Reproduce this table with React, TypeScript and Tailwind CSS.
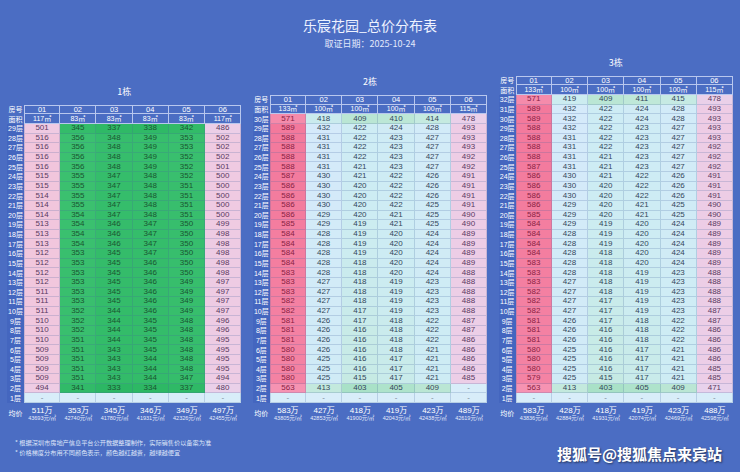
import React from 'react';

type Building = {
  name: string;
  areas: string[];
  top: number;
  rows: string[];
  avg: [string, string][];
};

const B1: Building = {
  name: '1栋',
  areas: ['117㎡', '83㎡', '83㎡', '83㎡', '83㎡', '117㎡'],
  top: 29,
  rows: [
    '501 345 337 338 342 486',
    '516 356 348 349 353 502',
    '516 356 348 349 353 502',
    '516 356 348 349 352 502',
    '516 356 348 349 352 501',
    '515 355 347 348 352 500',
    '515 355 347 348 351 500',
    '514 355 347 348 351 500',
    '514 355 347 348 351 500',
    '514 354 347 348 351 500',
    '513 354 346 347 350 499',
    '513 354 346 347 350 498',
    '513 354 346 347 350 498',
    '512 353 345 347 350 498',
    '512 353 345 346 350 498',
    '512 353 345 346 350 498',
    '512 353 345 346 349 497',
    '511 353 345 346 349 497',
    '511 353 345 346 349 497',
    '511 352 344 346 349 497',
    '510 352 344 345 348 496',
    '510 352 344 345 348 496',
    '510 351 344 345 348 495',
    '509 351 343 345 348 495',
    '509 351 343 344 348 495',
    '509 351 343 344 348 495',
    '509 351 343 344 347 494',
    '494 341 333 334 337 480',
    '- - - - - -',
  ],
  avg: [
    ['511万', '43693元/㎡'],
    ['353万', '42740元/㎡'],
    ['345万', '41780元/㎡'],
    ['346万', '41931元/㎡'],
    ['349万', '42326元/㎡'],
    ['497万', '42455元/㎡'],
  ],
};

const B2: Building = {
  name: '2栋',
  areas: ['133㎡', '100㎡', '100㎡', '100㎡', '100㎡', '115㎡'],
  top: 30,
  rows: [
    '571 418 409 410 414 478',
    '589 432 422 424 428 493',
    '588 431 422 423 427 493',
    '588 431 422 423 427 493',
    '588 431 422 423 427 492',
    '588 431 421 423 427 492',
    '587 430 421 422 426 491',
    '586 430 420 422 426 491',
    '586 430 420 422 426 491',
    '586 430 420 422 425 491',
    '586 429 420 421 425 490',
    '585 429 419 421 425 490',
    '584 428 419 420 424 489',
    '584 428 419 420 424 489',
    '584 428 419 420 424 489',
    '584 428 418 420 424 489',
    '583 428 418 420 424 488',
    '583 427 418 419 423 488',
    '583 427 418 419 423 488',
    '582 427 418 419 423 488',
    '582 427 417 419 423 488',
    '581 426 417 418 422 487',
    '581 426 416 418 422 487',
    '581 426 416 418 422 486',
    '580 426 416 418 421 486',
    '580 425 416 417 421 486',
    '580 425 416 417 421 486',
    '580 425 415 417 421 485',
    '563 413 403 405 409 -',
    '- - - - - -',
  ],
  avg: [
    ['583万', '43805元/㎡'],
    ['427万', '42853元/㎡'],
    ['418万', '41900元/㎡'],
    ['419万', '42043元/㎡'],
    ['423万', '42438元/㎡'],
    ['489万', '42619元/㎡'],
  ],
};

const B3: Building = {
  name: '3栋',
  areas: ['133㎡', '100㎡', '100㎡', '100㎡', '100㎡', '115㎡'],
  top: 32,
  rows: [
    '571 419 409 411 415 478',
    '589 432 422 424 428 493',
    '589 432 422 424 428 493',
    '588 432 422 423 427 493',
    '588 431 422 423 427 493',
    '588 431 422 423 427 492',
    '588 431 421 423 427 492',
    '587 431 421 423 427 492',
    '586 430 421 422 426 491',
    '586 430 420 422 426 491',
    '586 430 420 422 426 491',
    '586 429 420 421 425 490',
    '585 429 420 421 425 490',
    '584 429 419 420 424 489',
    '584 428 419 420 424 489',
    '584 428 419 420 424 489',
    '584 428 418 420 424 489',
    '583 428 418 420 424 489',
    '583 428 418 419 423 488',
    '583 427 418 419 423 488',
    '582 427 418 419 423 488',
    '582 427 417 419 423 488',
    '582 427 417 419 423 487',
    '581 426 417 418 422 487',
    '581 426 416 418 422 486',
    '581 426 416 418 422 486',
    '580 425 416 417 421 486',
    '580 425 416 417 421 486',
    '580 425 416 417 421 485',
    '579 425 415 417 421 485',
    '563 413 403 405 409 471',
    '- - - - - -',
  ],
  avg: [
    ['583万', '43836元/㎡'],
    ['428万', '42884元/㎡'],
    ['418万', '41931元/㎡'],
    ['419万', '42074元/㎡'],
    ['423万', '42469元/㎡'],
    ['488万', '42598元/㎡'],
  ],
};

const stops: [number, number, number, number][] = [
  [330, 42, 182, 98],
  [360, 62, 194, 114],
  [400, 160, 222, 192],
  [412, 194, 233, 218],
  [420, 205, 236, 243],
  [432, 213, 234, 250],
  [470, 232, 210, 236],
  [495, 238, 204, 228],
  [520, 242, 196, 218],
  [560, 246, 150, 180],
  [590, 243, 120, 155],
];

function bgFor(v: number): string {
  if (v <= stops[0][0]) return `rgb(${stops[0][1]},${stops[0][2]},${stops[0][3]})`;
  for (let i = 1; i < stops.length; i++) {
    const a = stops[i - 1];
    const b = stops[i];
    if (v <= b[0]) {
      const t = (v - a[0]) / (b[0] - a[0]);
      const r = Math.round(a[1] + (b[1] - a[1]) * t);
      const g = Math.round(a[2] + (b[2] - a[2]) * t);
      const bl = Math.round(a[3] + (b[3] - a[3]) * t);
      return `rgb(${r},${g},${bl})`;
    }
  }
  const l = stops[stops.length - 1];
  return `rgb(${l[1]},${l[2]},${l[3]})`;
}

function textFor(v: number): string {
  if (v < 370) return '#1a5532';
  if (v < 440) return '#34475c';
  if (v < 530) return '#5a3a62';
  return '#8a2244';
}

function Table({ b }: { b: Building }) {
  const cells: React.ReactNode[] = [];
  cells.push(
    <div key="h1l" className="flex items-center justify-center text-[7px] leading-none text-white">
      房号
    </div>
  );
  ['01', '02', '03', '04', '05', '06'].forEach((c, i) => {
    cells.push(
      <div
        key={'h1' + i}
        className={
          i === 0
            ? 'flex items-center justify-center border-t border-r border-b border-l border-[#b8c7ee] text-[7.5px] leading-none text-white'
            : 'flex items-center justify-center border-t border-r border-b border-[#b8c7ee] text-[7.5px] leading-none text-white'
        }
      >
        {c}
      </div>
    );
  });
  cells.push(
    <div key="h2l" className="flex items-center justify-center text-[7px] leading-none text-white">
      面积
    </div>
  );
  b.areas.forEach((c, i) => {
    cells.push(
      <div
        key={'h2' + i}
        className={
          i === 0
            ? 'flex items-center justify-center border-r border-b border-l border-[#b8c7ee] text-[7px] leading-none text-white'
            : 'flex items-center justify-center border-r border-b border-[#b8c7ee] text-[7px] leading-none text-white'
        }
      >
        {c}
      </div>
    );
  });
  b.rows.forEach((row, ri) => {
    const floor = b.top - ri;
    cells.push(
      <div
        key={'l' + ri}
        className="flex items-center justify-center bg-[#4466bf] text-[7px] leading-none text-white"
      >
        {floor}层
      </div>
    );
    row.split(' ').forEach((val, ci) => {
      const dash = val === '-';
      const v = dash ? 0 : parseInt(val, 10);
      const bg = dash ? '#d8edf9' : bgFor(v);
      const fg = dash ? '#7a8797' : textFor(v);
      cells.push(
        <div
          key={'c' + ri + '_' + ci}
          className={
            ci === 0
              ? 'flex items-center justify-center border-r border-b border-l border-[rgba(70,100,160,0.22)] text-[8px] leading-none'
              : 'flex items-center justify-center border-r border-b border-[rgba(70,100,160,0.22)] text-[8px] leading-none'
          }
          style={{ backgroundColor: bg, color: fg }}
        >
          {val}
        </div>
      );
    });
  });

  return (
    <div className="flex w-[235px] flex-col">
      <div className="mb-[7px] text-center text-[9px] leading-[12px] text-white">{b.name}</div>
      <div className="grid grid-cols-[17px_repeat(6,minmax(0,1fr))] auto-rows-[9.64px] font-['Liberation_Sans','Noto_Sans_CJK_SC',sans-serif]">
        {cells}
      </div>
      <div className="grid h-[20px] grid-cols-[17px_repeat(6,minmax(0,1fr))] font-['Liberation_Sans','Noto_Sans_CJK_SC',sans-serif]">
        <div className="flex items-center justify-center whitespace-nowrap text-[7px] leading-none text-white">均价</div>
        {b.avg.map(([a, s], i) => (
          <div key={i} className="flex flex-col items-center overflow-hidden pt-[3px] text-white">
            <div className="whitespace-nowrap text-[8px] leading-[9px]">{a}</div>
            <div className="whitespace-nowrap text-[5.5px] leading-[7px] text-[#e6ecfb]">{s}</div>
          </div>
        ))}
      </div>
    </div>
  );
}

export default function App() {
  return (
    <div className="relative h-[472px] w-[740px] overflow-hidden bg-[#4b6dc3] font-['Noto_Sans_CJK_SC','Noto_Sans',sans-serif]">
      <div className="pt-[16px] text-center">
        <div className="text-[14px] leading-[18px] text-[#eef2ff]">乐宸花园_总价分布表</div>
        <div className="mt-[4px] text-[9px] leading-[12px] text-[#e2e9fb]">取证日期：2025-10-24</div>
      </div>
      <div className="flex h-[373px] items-end gap-[11.5px] px-[7px]">
        <Table b={B1} />
        <Table b={B2} />
        <Table b={B3} />
      </div>
      <div className="mt-[15px] pl-[15px] text-[6.2px] leading-[10px] text-[#dfe6f9]">
        <div>* 根据深圳市房地产信息平台公开数据整理制作，实际销售价以备案为准</div>
        <div>* 价格梯度分布用不同颜色表示，颜色越红越贵，越绿越便宜</div>
      </div>
      <div className="absolute right-[18px] top-[444px] text-[15px] font-bold leading-[20px] text-white [text-shadow:1px_1px_2px_rgba(0,0,0,0.55)]">
        搜狐号@搜狐焦点来宾站
      </div>
    </div>
  );
}
